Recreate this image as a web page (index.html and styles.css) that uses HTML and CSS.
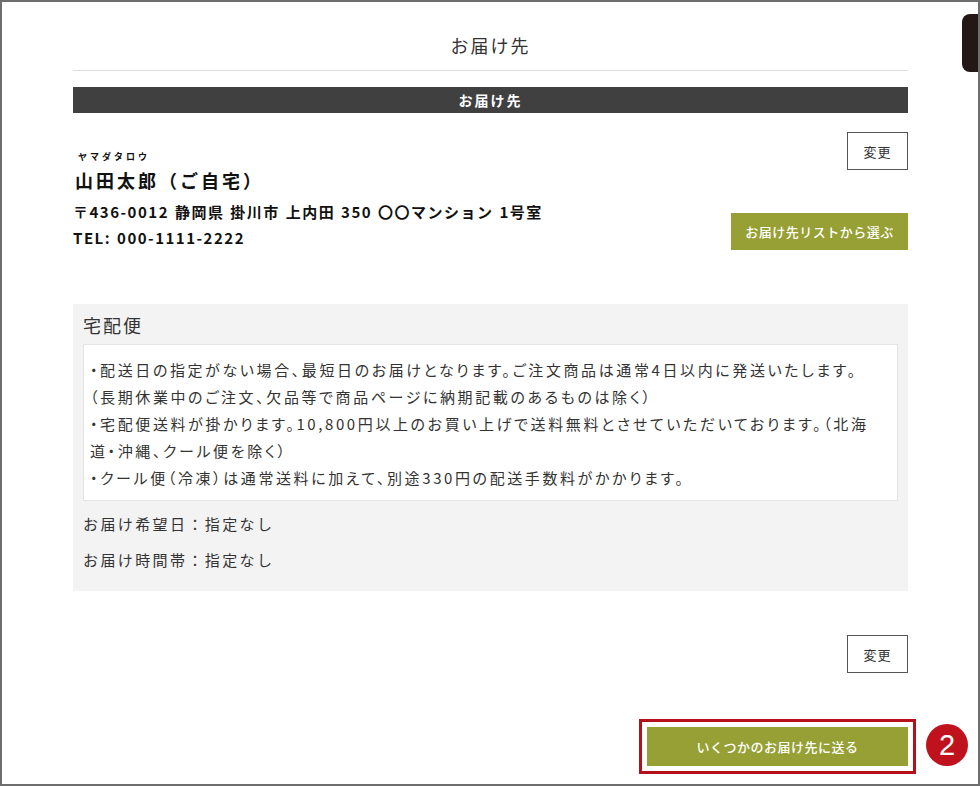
FILE: index.html
```html
<!DOCTYPE html>
<html lang="ja">
<head>
  <meta charset="UTF-8">
  <meta name="viewport" content="width=device-width, initial-scale=1.0">
  <title>お届け先</title>
  <link rel="stylesheet" href="styles.css">
</head>
<body>
  <div class="screen">
    <div class="side-tab"></div>
    <div class="container">
      <h1 class="page-title">お届け先</h1>
      <div class="bar">お届け先</div>

      <div class="address">
        <div class="address-info">
          <div class="kana">ヤマダタロウ</div>
          <div class="name">山田太郎（ご自宅）</div>
          <div class="line">〒436-0012 静岡県 掛川市 上内田 350 〇〇マンション 1号室</div>
          <div class="line">TEL: 000-1111-2222</div>
        </div>
        <div class="address-actions">
          <button class="btn-outline">変更</button>
          <button class="btn-green btn-list">お届け先リストから選ぶ</button>
        </div>
      </div>

      <div class="delivery">
        <h2 class="delivery-title">宅配便</h2>
        <div class="notes">
          ・配送日の指定がない場合、最短日のお届けとなります。ご注文商品は通常4日以内に発送いたします。<br>
          （長期休業中のご注文、欠品等で商品ページに納期記載のあるものは除く）<br>
          ・宅配便送料が掛かります。10,800円以上のお買い上げで送料無料とさせていただいております。（北海道・沖縄、クール便を除く）<br>
          ・クール便（冷凍）は通常送料に加えて、別途330円の配送手数料がかかります。
        </div>
        <div class="field">お届け希望日：指定なし</div>
        <div class="field">お届け時間帯：指定なし</div>
      </div>

      <div class="row-right change-row">
        <button class="btn-outline">変更</button>
      </div>

      <div class="row-right send-row">
        <button class="btn-green btn-send">いくつかのお届け先に送る</button>
      </div>
    </div>
    <div class="step-badge">2</div>
  </div>
</body>
</html>
```

FILE: styles.css
```css
body {
  margin: 0;
  font-family: "Noto Sans CJK JP", "Noto Sans", sans-serif;
  color: #333;
  background: #fff;
}

.screen {
  position: relative;
  box-sizing: border-box;
  height: 786px;
  border: 2px solid #6e6e6e;
  overflow: hidden;
}

.side-tab {
  position: absolute;
  top: 12px;
  right: -2px;
  width: 18px;
  height: 58px;
  background-color: #231815;
  border-radius: 8px 0 0 8px;
}

.container {
  width: 835px;
  margin-left: 71px;
}

.page-title {
  margin: 0;
  padding: 30px 0 12px;
  font-size: 18px;
  font-weight: 400;
  line-height: 26px;
  letter-spacing: 2px;
  text-align: center;
  border-bottom: 1px solid #ddd;
}

.bar {
  margin-top: 16px;
  height: 26px;
  line-height: 26px;
  background-color: #404040;
  color: #fff;
  font-size: 14px;
  font-weight: 700;
  letter-spacing: 2px;
  text-align: center;
}

.address {
  display: flex;
  justify-content: space-between;
  padding-top: 19px;
}

.address-info {
  padding-top: 19px;
  color: #111;
}

.kana {
  padding-left: 5px;
  font-size: 9px;
  font-weight: 700;
  line-height: 12px;
  letter-spacing: 3px;
}

.name {
  margin-top: 4px;
  padding-left: 2px;
  font-size: 18px;
  font-weight: 700;
  line-height: 26px;
  letter-spacing: 3px;
}

.line {
  font-size: 15px;
  font-weight: 700;
  line-height: 26px;
  letter-spacing: 1.5px;
  word-spacing: 1px;
}

.name + .line {
  margin-top: 6px;
}

.address-actions {
  display: flex;
  flex-direction: column;
  align-items: flex-end;
}

.btn-outline {
  width: 61px;
  height: 38px;
  padding: 0;
  border: 1px solid #555;
  background: #fff;
  color: #333;
  font-family: inherit;
  font-size: 13px;
  letter-spacing: 1px;
}

.btn-green {
  padding: 0;
  border: none;
  background-color: #96a034;
  color: #fff;
  font-family: inherit;
  font-size: 13px;
  font-weight: 500;
  letter-spacing: 0.5px;
}

.btn-list {
  margin-top: 43px;
  width: 177px;
  height: 37px;
}

.delivery {
  margin-top: 53px;
  padding: 9px 10px 13px;
  background-color: #f3f3f3;
}

.delivery-title {
  margin: 0 0 7px;
  font-size: 18px;
  font-weight: 400;
  line-height: 24px;
  letter-spacing: 2px;
}

.notes {
  padding: 11px 6px 9px;
  border: 1px solid #e4e4e4;
  background: #fff;
  font-size: 15px;
  line-height: 27px;
  letter-spacing: 2.6px;
  font-feature-settings: "palt";
}

.field {
  font-size: 15px;
  line-height: 36px;
  letter-spacing: 2.4px;
}

.notes + .field {
  margin-top: 5px;
}

.row-right {
  display: flex;
  justify-content: flex-end;
}

.change-row {
  margin-top: 44px;
}

.send-row {
  margin-top: 54px;
}

.btn-send {
  width: 261px;
  height: 39px;
  outline: 3px solid #b5101c;
  outline-offset: 5px;
}

.step-badge {
  position: absolute;
  left: 924px;
  top: 722px;
  width: 42px;
  height: 42px;
  border-radius: 50%;
  background-color: #c0121d;
  color: #fff;
  font-family: "Liberation Sans", sans-serif;
  font-size: 29px;
  line-height: 42px;
  text-align: center;
}
```
